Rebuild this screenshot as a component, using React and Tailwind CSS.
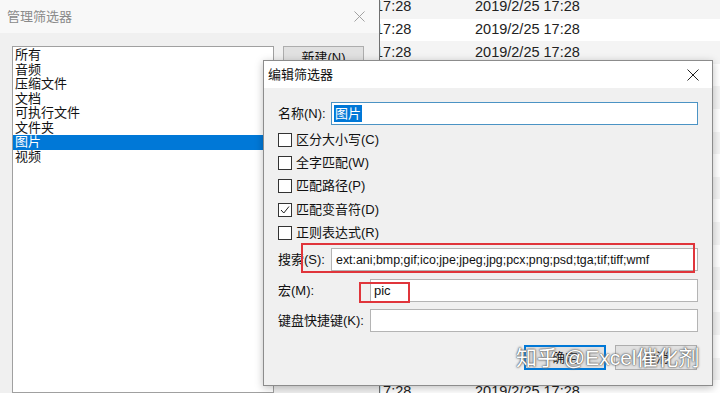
const filters = ["所有", "音频", "压缩文件", "文档", "可执行文件", "文件夹", "图片", "视频"];

const options = [
  { label: "区分大小写", key: "C", checked: false },
  { label: "全字匹配", key: "W", checked: false },
  { label: "匹配路径", key: "P", checked: false },
  { label: "匹配变音符", key: "D", checked: true },
  { label: "正则表达式", key: "R", checked: false },
];

const CloseIcon = ({ className }) => (
  <svg className={className} viewBox="0 0 12 12" fill="none" stroke="currentColor" strokeWidth="1">
    <path d="M0.5 0.5l11 11M11.5 0.5l-11 11" />
  </svg>
);

const Checkbox = ({ checked }) => (
  <div className="w-[14px] h-[14px] border border-[#333] bg-white flex items-center justify-center">
    {checked && (
      <svg className="w-[10px] h-[10px]" viewBox="0 0 10 10" fill="none" stroke="#222" strokeWidth="1">
        <path d="M1 5l2.8 3L9 1.5" />
      </svg>
    )}
  </div>
);

const App = () => {
  return (
    <div className="relative w-[720px] h-[393px] overflow-hidden bg-white text-[13px] text-[#111] font-['Liberation_Sans','Noto_Sans_CJK_SC',sans-serif]">
      {/* file list behind the dialogs */}
      <div className="absolute inset-0 flex flex-col mt-[-4px]">
        {Array.from({ length: 19 }).map((_, i) => (
          <div
            key={i}
            className={`h-[22.6px] shrink-0 flex items-center pl-[375px] text-[14.5px] text-[#222] ${i % 2 === 0 ? "bg-[#f4f4f4]" : "bg-white"}`}
          >
            <span className="w-[100px]">17:28</span>
            <span>2019/2/25 17:28</span>
          </div>
        ))}
      </div>

      {/* 管理筛选器 */}
      <div className="absolute left-0 top-0 w-[380px] h-full bg-[#f0f0f0] border-r border-[#707070] flex flex-col">
        <div className="h-[33px] shrink-0 bg-[#f8f8f8] flex items-center justify-between pl-[7px] pr-[14px] text-[#8a8a8a]">
          <span>管理筛选器</span>
          <CloseIcon className="w-[11px] h-[11px] text-[#999]" />
        </div>
        <div className="flex gap-[9px] pl-[12px] pt-[13px] flex-1">
          <div className="w-[262px] h-full bg-white border border-[#a0a0a0] pt-[1px] flex flex-col leading-[14.5px]">
            {filters.map((f) => (
              <div
                key={f}
                className={`pl-[2px] ${f === "图片" ? "bg-[#0078d7] text-white" : "text-[#111]"}`}
              >
                {f}
              </div>
            ))}
          </div>
          <div className="w-[81px] h-[23px] bg-[#e1e1e1] border border-[#adadad] flex items-center justify-center">
            新建(N)
          </div>
        </div>
      </div>

      {/* 编辑筛选器 */}
      <div className="absolute left-[263px] top-[60px] w-[450px] h-[326px] bg-[#f0f0f0] border border-[#8c8c8c] shadow-[0_2px_8px_rgba(0,0,0,0.25)] flex flex-col">
        <div className="h-[27px] shrink-0 bg-white flex items-center justify-between pl-[4px] pr-[13px]">
          <span className="text-[#111]">编辑筛选器</span>
          <CloseIcon className="w-[12px] h-[12px] text-[#222]" />
        </div>

        <div className="flex flex-col pl-[14px] pr-[14px] pt-[14px]">
          <div className="flex items-center h-[23px]">
            <span className="w-[53px]">名称(N):</span>
            <div className="flex-1 h-[23px] bg-white border border-[#4b93c4] flex items-center pl-[2px]">
              <span className="bg-[#0078d7] text-white leading-[17px] px-[1px]">图片</span>
            </div>
          </div>

          <div className="flex flex-col mt-[3px]">
            {options.map((o) => (
              <div key={o.key} className="h-[23.3px] flex items-center gap-[4px]">
                <Checkbox checked={o.checked} />
                <span>
                  {o.label}({o.key})
                </span>
              </div>
            ))}
          </div>

          <div className="flex items-center h-[23px] mt-[4px]">
            <span className="w-[53px]">搜索(S):</span>
            <div className="flex-1 h-[23px] bg-white border border-[#b4b4b4] flex items-center pl-[4px] text-[12.4px] text-[#111]">
              ext:ani;bmp;gif;ico;jpe;jpeg;jpg;pcx;png;psd;tga;tif;tiff;wmf
            </div>
          </div>

          <div className="flex items-center h-[23px] mt-[8px]">
            <span className="w-[92px]">宏(M):</span>
            <div className="flex-1 h-[23px] bg-white border border-[#b4b4b4] flex items-center pl-[3px] text-[13px]">
              pic
            </div>
          </div>

          <div className="flex items-center h-[23px] mt-[7px]">
            <span className="w-[92px]">键盘快捷键(K):</span>
            <div className="flex-1 h-[23px] bg-white border border-[#b4b4b4]" />
          </div>

          <div className="flex justify-end gap-[9px] mt-[13px] pr-[1px]">
            <div className="w-[82px] h-[25px] bg-[#e1e1e1] border-2 border-[#0078d7] flex items-center justify-center">
              确定
            </div>
            <div className="w-[82px] h-[25px] bg-[#e1e1e1] border border-[#adadad] flex items-center justify-center">
              取消
            </div>
          </div>
        </div>

        {/* red annotation boxes */}
        <div className="absolute left-[37px] top-[182px] w-[394px] h-[30px] border-2 border-[#e0353b]" />
        <div className="absolute left-[95px] top-[221px] w-[51px] h-[21px] border-2 border-[#e0353b]" />
      </div>

      {/* watermark */}
      <div className="absolute left-[516px] top-[344px] text-[21px] leading-[28px] text-white [text-shadow:0_0_1px_#444,0_0_2px_#666,0_0_3px_#999]">
        知乎 @Excel催化剂
      </div>
    </div>
  );
};

export default App;
